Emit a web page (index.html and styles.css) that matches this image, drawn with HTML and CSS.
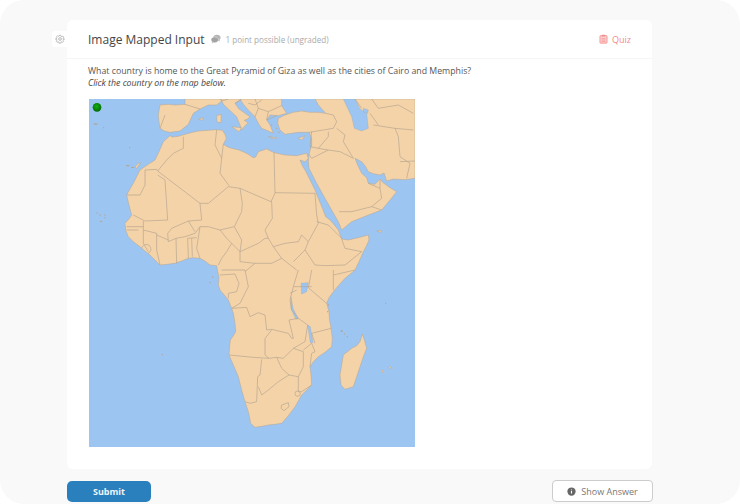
FILE: index.html
```html
<!DOCTYPE html>
<html lang="en">
<head>
    <meta charset="UTF-8">
    <meta name="viewport" content="width=device-width, initial-scale=1.0">
    <title>Image Mapped Input</title>
    <link rel="stylesheet" href="styles.css">
</head>
<body>
    <div class="panel">
        <div class="card">
            <div class="settings-tab">
                <svg class="gear" viewBox="0 0 24 24" fill="none" stroke="currentColor" stroke-width="2">
                    <circle cx="12" cy="12" r="3.2"/>
                    <path d="M10 2h4l.6 3 2.400 1 2.600-1.700 2.800 2.800L20 9.700l1 2.300 3 .6v.1l-3 .6-1 2.400 1.700 2.600-2.800 2.800L17.300 19l-2.300 1-.6 3h-4.800l-.6-3-2.300-1-2.600 1.800-2.800-2.800L4 15.400l-1-2.400-3-.6v-.8l3-.6 1-2.300L2.300 6.100l2.800-2.800L7.700 5l2.300-1z" transform="translate(1.200 1.200) scale(.9)"/>
                </svg>
            </div>
            <header class="card-header">
                <h2 class="title">Image Mapped Input</h2>
                <svg class="bubble" viewBox="0 0 24 24">
                    <path d="M14 2c5 0 9 3 9 7 0 2-1 3.800-2.600 5L21 18l-4-2c-1 .3-2 .4-3 .4-5 0-9-3.200-9-7.200S9 2 14 2z" fill="#b5b5b5"/>
                    <path d="M9 7c5 0 9 3 9 7s-4 7-9 7c-1 0-2-.1-3-.4L2 23l.8-4.600C1.300 17.100 0 15.600 0 14c0-4 4-7 9-7z" fill="#a3a3a3" stroke="#fff" stroke-width="1"/>
                </svg>
                <span class="points">1 point possible (ungraded)</span>
                <span class="quiz">
                    <svg class="clipboard" viewBox="0 0 20 24">
                        <path d="M3 4h14a1.500 1.500 0 0 1 1.500 1.500v15A1.500 1.500 0 0 1 17 22H3a1.500 1.500 0 0 1-1.500-1.500v-15A1.500 1.500 0 0 1 3 4z" fill="#fbd0d0" stroke="#f58c8c" stroke-width="2"/>
                        <rect x="6" y="2" width="8" height="4" rx="1" fill="#f58c8c"/>
                        <path d="M5.500 11h9M5.500 14.500h9M5.500 18h9" stroke="#f58c8c" stroke-width="1.500"/>
                    </svg>
                    Quiz
                </span>
            </header>
            <div class="card-body">
                <p class="question">What country is home to the Great Pyramid of Giza as well as the cities of Cairo and Memphis?</p>
                <p class="hint">Click the country on the map below.</p>
                <svg class="map" viewBox="12 12 978 1044">
                    <defs>
                        <radialGradient id="dot" cx="45%" cy="40%" r="60%">
                            <stop offset="0" stop-color="#12b012"/>
                            <stop offset="1" stop-color="#056b05"/>
                        </radialGradient>
                    </defs>
                    <rect x="12" y="12" width="978" height="1044" fill="#9dc5f2"/>

                    <g class="land">
                        <!-- africa -->
                        <path d="M255 122L262 126 280 124 300 118 318 113 340 108 370 106 395 104 412 106 420 118 424 130 415 148 428 156 440 160 462 165 478 172 490 178 505 188 512 186 520 170 545 162 565 172 585 177 600 180 635 182 652 178 665 175 670 190 660 200 645 195 652 212 660 225 672 248 680 265 690 285 700 310 712 340 722 365 735 375 748 390 760 405 770 432 790 435 820 428 850 420 852 435 843 455 835 470 822 500 810 525 795 538 780 550 760 572 745 590 732 608 725 625 732 650 733 670 738 700 742 730 740 755 720 772 700 785 685 800 675 815 678 840 680 870 665 885 650 900 640 918 630 935 610 962 590 985 570 988 550 990 530 994 510 997 497 985 494 968 490 950 480 920 470 885 460 845 445 810 432 780 434 755 436 735 445 722 452 710 450 685 445 655 438 635 430 615 418 600 405 585 400 570 402 545 398 530 395 512 375 510 360 498 345 490 325 488 310 490 290 498 270 505 245 508 225 510 210 495 195 480 180 468 165 455 145 440 130 425 122 405 120 385 132 372 140 360 132 330 125 300 135 282 145 265 155 245 165 225 190 208 210 195 222 170 235 140z"/>
                        <!-- turkey, levant, arabia, iran -->
                        <path d="M580 70L600 60 625 52 650 48 675 52 700 52 722 55 700 30 690 12 990 12 990 250 960 254 925 252 905 258 897 234 885 240 865 236 850 230 840 212 830 200 810 190 818 210 830 235 845 248 850 265 870 268 885 252 893 262 915 278 935 290 915 315 890 345 850 360 800 380 770 405 760 380 740 345 720 310 695 265 672 220 670 200 672 178 680 150 680 130 672 112 640 112 600 118 585 105 578 85z"/>
                        <!-- spain, france -->
                        <path d="M225 30L250 28 270 30 300 28 300 12 405 12 410 18 395 30 370 30 345 42 325 55 318 70 310 88 285 108 255 112 238 108 225 100 222 80 220 60z"/>
                        <!-- italy -->
                        <path d="M408 12L470 12 450 25 462 42 480 55 495 65 488 72 478 76 490 84 480 92 470 105 465 90 455 65 430 42 415 28z"/>
                        <!-- balkans -->
                        <path d="M465 12L590 12 590 32 605 55 580 62 555 60 545 75 555 90 565 115 550 108 530 100 520 85 510 65 490 45 475 28z"/>
                        <!-- madagascar -->
                        <path d="M832 717L838 735 845 760 835 785 825 815 815 845 805 875 780 883 768 870 765 840 775 780 800 760 815 752 825 740z"/>
                        <!-- islands -->
                        <path d="M395 62L408 58 408 82 396 82zM440 95L470 98 462 110zM340 72L355 68 352 76zM550 125L575 128 570 132zM640 130L660 122 650 135z"/>
                        <path d="M160 205L167 203 155 220 150 216zM875 408L890 406 888 412z"/>
                        <circle cx="893" cy="829" r="3"/>
                        <circle cx="915" cy="818" r="3"/>
                    </g>

                    <g class="sea">
                        <!-- caspian -->
                        <path d="M775 12L810 12 825 42 845 55 850 100 830 108 808 100 800 65z"/>
                        <!-- black sea corner -->
                        <path d="M835 40L850 45 848 55 836 52z"/>
                        <!-- lakes -->
                        <path d="M648 565L670 563 665 590 650 597z"/>
                        <path d="M618 605L624 640 640 672 632 672 618 640z"/>
                        <path d="M668 690L676 695 684 743 676 743z"/>
                    </g>

                    <g class="specks">
                        <ellipse cx="32" cy="87" rx="7" ry="2"/>
                        <circle cx="56" cy="98" r="2"/>
                        <circle cx="134" cy="158" r="2"/>
                        <ellipse cx="128" cy="212" rx="6" ry="2"/>
                        <ellipse cx="143" cy="217" rx="5" ry="2"/>
                        <circle cx="36" cy="354" r="2"/>
                        <circle cx="45" cy="360" r="2"/>
                        <circle cx="60" cy="360" r="2"/>
                        <circle cx="60" cy="368" r="2"/>
                        <ellipse cx="48" cy="379" rx="4" ry="2"/>
                        <circle cx="375" cy="563" r="2"/>
                        <circle cx="383" cy="546" r="2"/>
                        <circle cx="232" cy="779" r="2"/>
                        <circle cx="770" cy="708" r="3"/>
                        <circle cx="778" cy="717" r="2"/>
                        <circle cx="787" cy="725" r="2"/>
                        <circle cx="902" cy="625" r="2"/>
                        <circle cx="730" cy="630" r="2"/>
                        <circle cx="728" cy="650" r="2"/>
                        <circle cx="560" cy="90" r="2"/>
                        <circle cx="575" cy="100" r="2"/>
                        <circle cx="582" cy="112" r="2"/>
                    </g>

                    <g class="borders">
                        <!-- north and west africa -->
                        <path d="M295 125L295 160 265 175 245 195 218 228 345 325 370 325 430 275 465 280 558 320 570 295 567 172"/>
                        <path d="M395 105L390 150 410 190 405 235 432 272M415 148L410 190"/>
                        <path d="M125 300L165 300 180 270 180 225 215 223 218 228M240 255L248 375 180 378 145 360M240 255L218 240"/>
                        <path d="M345 325L350 375 310 378 260 400 248 415 250 440 273 430 300 425 330 415 345 395 370 395 405 405 448 395 470 350 472 325 465 280"/>
                        <path d="M310 378L330 410M175 378L175 405 215 415 215 465 225 510M175 405L175 445 190 470M215 420L250 435M273 430L275 505M308 430L310 490M320 430L322 485M308 430L335 428M345 395L335 460 345 490"/>
                        <path d="M125 395L175 395M125 405L160 405M170 460A14 14 0 1 1 190 475"/>
                        <path d="M405 405L425 430 440 445 425 470 410 490 400 510M440 445L465 470"/>
                        <path d="M448 395L470 435 465 470 520 445 540 430 550 430 540 405 562 370 560 320 558 320"/>
                        <path d="M465 470L465 500 510 505 560 505 590 490 565 455 550 430M565 455L600 445 640 440 650 420 670 440 660 465 690 510 720 512 780 510 830 470 780 460 770 432"/>
                        <path d="M570 293L690 295 695 360 700 385 670 440M695 380L730 390 770 430M590 490L635 525M660 465L625 500"/>
                        <!-- central and southern africa -->
                        <path d="M405 540L450 537 462 565 455 590 430 595 430 610M410 525L480 525 490 575 465 625 440 640 485 637 495 665 520 653 540 660 545 705 560 703 610 715 620 730 625 730 612 675 640 670"/>
                        <path d="M510 505L480 530M640 525L625 575 615 615 620 645 640 670 668 690 660 740 625 760 595 790 575 787 552 790 505 787 432 780"/>
                        <path d="M560 705L540 730 540 780 552 790M530 793L525 840 518 845 515 920 495 925 480 920"/>
                        <path d="M575 787L590 820 612 840 580 860 550 885 530 900 520 875M612 840L640 845 655 815 655 770 625 760M640 845L640 890 650 890 680 870"/>
                        <path d="M655 765L680 745 690 770 680 775 675 815M680 715L690 745M680 715L738 700M672 580L725 625M625 575L680 575M680 525L670 580M745 525L745 585M810 525L745 540M615 595L635 585"/>
                        <!-- lesotho, swaziland -->
                        <path d="M590 930L610 923 612 935 597 947 588 940z"/>
                        <circle cx="638" cy="896" r="8"/>
                        <!-- middle east -->
                        <path d="M672 178L680 190 730 165 700 160 675 155M730 165L765 170 805 190M680 110L675 155M700 160L730 125 730 110M672 112L745 100 755 80 745 60M755 100L780 120 775 140 805 190"/>
                        <path d="M762 350L800 350 860 335 890 310 885 280 850 265M860 335L890 345M885 255L885 280"/>
                        <path d="M865 90L930 100 985 105M930 100L940 125 945 185 975 205 965 250M945 200L990 198M855 55L880 90"/>
                        <path d="M860 12L880 40 940 30 985 55M810 12L830 40M745 60L722 55"/>
                        <!-- europe -->
                        <path d="M510 12L520 40 550 50 590 32M490 25L510 30 530 15M520 40L510 65M550 50L545 75 575 62M300 28L345 42M240 60L225 100M430 12L410 18M450 25L470 12"/>
                    </g>

                    <circle cx="36" cy="37" r="13" fill="url(#dot)"/>
                </svg>
            </div>
        </div>
        <div class="actions">
            <button type="button" class="submit">Submit</button>
            <button type="button" class="show-answer">
                <svg class="info" viewBox="0 0 24 24">
                    <circle cx="12" cy="12" r="11" fill="#666"/>
                    <path d="M12 10.500v7M12 6.500v2" stroke="#fff" stroke-width="3"/>
                </svg>
                Show Answer
            </button>
        </div>
    </div>
</body>
</html>
```

FILE: styles.css
```css
* {
    box-sizing: border-box;
}
html, body {
    margin: 0;
    background-color: white;
}
body {
    font-family: "Open Sans", Arial, sans-serif;
}
.panel {
    width: 740px;
    height: 504px;
    padding: 20px 88px 0 67px;
    background-color: #f9f9f9;
    border-radius: 24px;
}
.card {
    position: relative;
    height: 449px;
    background-color: white;
    border-radius: 6px;
}
.settings-tab {
    position: absolute;
    left: -15px;
    top: 11px;
    width: 15px;
    height: 16px;
    display: flex;
    align-items: center;
    justify-content: center;
    background-color: white;
    border-radius: 3px 0 0 3px;
    color: #aaa;
}
.gear {
    width: 10px;
    height: 10px;
}
.card-header {
    display: flex;
    align-items: center;
    height: 39px;
    padding: 0 21px 0 21px;
    border-bottom: 1px solid #f5f5f5;
}
.title {
    margin: 0;
    font-size: 12px;
    font-weight: 400;
    color: #444;
}
.bubble {
    width: 10px;
    height: 10px;
    margin-left: 6px;
}
.points {
    margin-left: 5px;
    font-size: 8.1px;
    color: #aaa;
}
.quiz {
    display: flex;
    align-items: center;
    gap: 4px;
    margin-left: auto;
    font-size: 9px;
    color: #f28a8a;
}
.clipboard {
    width: 9px;
    height: 10px;
}
.card-body {
    padding: 6px 21px 0 21px;
}
.question, .hint {
    margin: 0;
    font-size: 8.75px;
    line-height: 12px;
    color: #555;
}
.hint {
    font-style: italic;
    color: #444;
}
.map {
    display: block;
    width: 326px;
    height: 348px;
    margin: 10px 0 0 1px;
    stroke-linejoin: round;
}
.land path, .land circle {
    fill: #f5d3a8;
    stroke: #b3a491;
    stroke-width: 1.500;
}
.sea path {
    fill: #9dc5f2;
    stroke: #9aa3ad;
    stroke-width: 1;
}
.specks circle, .specks ellipse {
    fill: #b3a491;
}
.borders path, .borders circle {
    fill: none;
    stroke: #b3a491;
    stroke-width: 2;
}
.actions {
    display: flex;
    justify-content: space-between;
    align-items: center;
    margin-top: 11px;
}
.submit {
    width: 84px;
    height: 21px;
    border: none;
    border-radius: 5px;
    background-color: #2a7fbd;
    color: #eef5fa;
    font-family: inherit;
    font-size: 9px;
    font-weight: 700;
    cursor: pointer;
}
.show-answer {
    display: flex;
    align-items: center;
    justify-content: center;
    gap: 5px;
    width: 101px;
    height: 22px;
    margin-right: -1px;
    border: 1px solid #ccc;
    border-radius: 4px;
    background-color: white;
    color: #777;
    font-family: inherit;
    font-size: 9px;
    cursor: pointer;
}
.info {
    width: 9px;
    height: 9px;
}
```
